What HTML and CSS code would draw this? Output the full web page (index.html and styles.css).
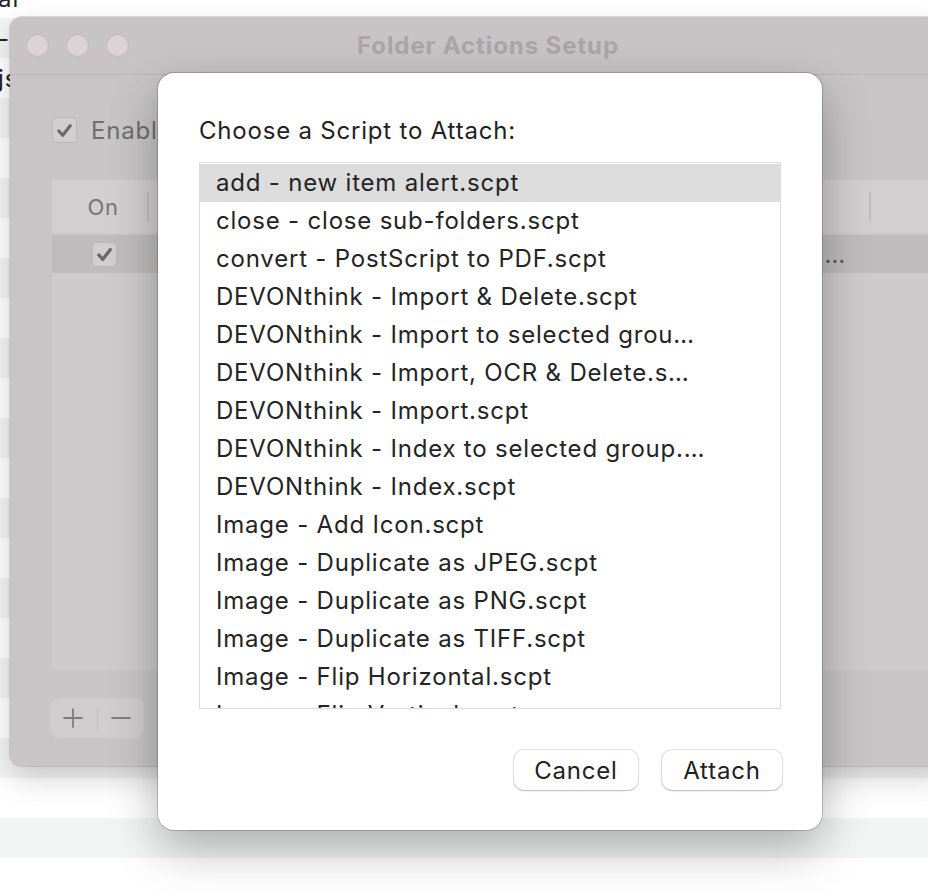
FILE: index.html
```html
<!DOCTYPE html>
<html>
<head>
<meta charset="utf-8">
<link rel="stylesheet" href="styles.css">
</head>
<body>
<div class="page">
  <div class="bg-rows">
    <div class="bg-row"><span class="bg-text">al</span></div>
    <div class="bg-row gray"><span class="bg-text">-l</span></div>
    <div class="bg-row"><span class="bg-text">js</span></div>
    <div class="bg-row gray"></div>
    <div class="bg-row"></div>
    <div class="bg-row gray"></div>
    <div class="bg-row"></div>
    <div class="bg-row gray"></div>
    <div class="bg-row"></div>
    <div class="bg-row gray"></div>
    <div class="bg-row"></div>
    <div class="bg-row gray"></div>
    <div class="bg-row"></div>
    <div class="bg-row gray"></div>
    <div class="bg-row"></div>
    <div class="bg-row gray"></div>
    <div class="bg-row"></div>
    <div class="bg-row gray"></div>
    <div class="bg-row"></div>
    <div class="bg-row gray"></div>
    <div class="bg-row"></div>
    <div class="bg-row gray"></div>
    <div class="bg-row"></div>
  </div>

  <div class="window">
    <div class="titlebar">
      <div class="lights">
        <span class="light"></span><span class="light"></span><span class="light"></span>
      </div>
      <div class="title">Folder Actions Setup</div>
    </div>
    <div class="win-body">
      <label class="enable">
        <span class="cb big"><svg viewBox="0 0 24 24"><path d="M5.5 12.5l4.5 5 8.5-11" fill="none" stroke="currentColor" stroke-width="3.6" stroke-linecap="round" stroke-linejoin="round"/></svg></span>
        <span class="enable-text">Enable Folder Actions</span>
      </label>
      <div class="table">
        <div class="thead">
          <div class="th on">On</div>
          <div class="th sep"></div>
          <div class="th grow">Folders with Actions</div>
          <div class="th sep"></div>
        </div>
        <div class="trow sel">
          <div class="td on"><span class="cb small"><svg viewBox="0 0 24 24"><path d="M5.5 12.5l4.5 5 8.5-11" fill="none" stroke="currentColor" stroke-width="3.8" stroke-linecap="round" stroke-linejoin="round"/></svg></span></div>
          <div class="td name">Desktop — ~/Library/Scripts/Folder Action Scripts/add - new item alert.scpt and other scripts</div>
        </div>
        <div class="tfill"></div>
      </div>
      <div class="pm">
        <span class="pm-btn"><svg viewBox="0 0 24 24"><path d="M12 1.5v21M1.5 12h21" stroke="currentColor" stroke-width="2" fill="none"/></svg></span>
        <span class="pm-sep"></span>
        <span class="pm-btn"><svg viewBox="0 0 24 24"><path d="M1.5 12h21" stroke="currentColor" stroke-width="2" fill="none"/></svg></span>
      </div>
    </div>
  </div>

  <div class="sheet">
    <div class="sheet-label">Choose a Script to Attach:</div>
    <div class="list">
      <div class="item selected">add - new item alert.scpt</div>
      <div class="item">close - close sub-folders.scpt</div>
      <div class="item">convert - PostScript to PDF.scpt</div>
      <div class="item">DEVONthink - Import &amp; Delete.scpt</div>
      <div class="item">DEVONthink - Import to selected grou…</div>
      <div class="item">DEVONthink - Import, OCR &amp; Delete.s…</div>
      <div class="item">DEVONthink - Import.scpt</div>
      <div class="item">DEVONthink - Index to selected group.…</div>
      <div class="item">DEVONthink - Index.scpt</div>
      <div class="item">Image - Add Icon.scpt</div>
      <div class="item">Image - Duplicate as JPEG.scpt</div>
      <div class="item">Image - Duplicate as PNG.scpt</div>
      <div class="item">Image - Duplicate as TIFF.scpt</div>
      <div class="item">Image - Flip Horizontal.scpt</div>
      <div class="item">Image - Flip Vertical.scpt</div>
      <div class="item">Image - Info to Comment.scpt</div>
    </div>
    <div class="buttons">
      <button class="btn cancel">Cancel</button>
      <button class="btn attach">Attach</button>
    </div>
  </div>
</div>
</body>
</html>
```
FILE: styles.css
```css
html, body {
  margin: 0;
  padding: 0;
}
body {
  width: 928px;
  height: 896px;
  overflow: hidden;
  background: #ffffff;
  font-family: Inter, "Noto Sans", "Liberation Sans", sans-serif;
}
.page {
  position: relative;
  width: 928px;
  height: 896px;
  overflow: hidden;
}

/* background page rows */
.bg-rows {
  display: flex;
  flex-direction: column;
  margin-top: -22px;
}
.bg-row {
  height: 40px;
  background: #ffffff;
  display: flex;
  align-items: center;
}
.bg-row.gray { background: #f3f4f4; }
.bg-text {
  font-size: 24px;
  color: #222;
  margin-left: -2px;
  letter-spacing: 1px;
}

/* background window */
.window {
  position: absolute;
  left: 10px;
  top: 17px;
  width: 940px;
  height: 749px;
  border-radius: 12px;
  background: #c7c5c6;
  box-shadow: 0 0 0 1px rgba(0,0,0,0.12), 0 12px 30px rgba(0,0,0,0.18);
  display: flex;
  flex-direction: column;
  overflow: hidden;
}
.titlebar {
  height: 57px;
  flex: none;
  background: #c8c4c6;
  border-bottom: 1px solid #b9b5b7;
  display: flex;
  align-items: center;
  position: relative;
}
.lights {
  display: flex;
  gap: 17px;
  padding-left: 16px;
}
.light {
  width: 23px;
  height: 23px;
  border-radius: 50%;
  background: #dcd3d7;
  box-shadow: inset 0 0 0 1px #c3b8bc;
}
.title {
  position: absolute;
  left: 0;
  width: 956px;
  text-align: center;
  font-weight: 700;
  font-size: 24px;
  letter-spacing: 0.9px;
  color: #aaa6a8;
}
.win-body {
  flex: 1;
  padding: 42px 0 0 42px;
  display: flex;
  flex-direction: column;
  background: #c7c5c6;
}
.enable {
  display: flex;
  align-items: center;
  gap: 14px;
  height: 26px;
}
.cb {
  display: inline-flex;
  align-items: center;
  justify-content: center;
  border-radius: 5px;
  background: #d0cecf;
  border: 1px solid #b9b7b8;
  color: #6a6869;
  box-sizing: border-box;
}
.cb.big { width: 25px; height: 26px; }
.cb.small { width: 25px; height: 25px; }
.cb svg { width: 21px; height: 21px; }
.enable-text {
  font-size: 24px;
  letter-spacing: 0.8px;
  color: #6f6d6e;
  white-space: nowrap;
}
.table {
  margin-top: 37px;
  width: 960px;
  height: 490px;
  display: flex;
  flex-direction: column;
  background: #cdcbcc;
}
.thead {
  height: 53px;
  flex: none;
  display: flex;
  align-items: center;
  background: #d1cfd0;
  border-bottom: 2px solid #c9c7c8;
}
.th {
  font-size: 22px;
  letter-spacing: 0.6px;
  color: #777576;
}
.th.on {
  width: 95px;
  box-sizing: border-box;
  padding-left: 7px;
  text-align: center;
}
.th.sep {
  width: 2px;
  height: 30px;
  background: #bfbdbe;
  flex: none;
}
.th.grow {
  width: 712px;
  padding-left: 8px;
  white-space: nowrap;
  overflow: hidden;
}
.trow {
  height: 38px;
  flex: none;
  display: flex;
  align-items: center;
}
.trow.sel { background: #bebcbd; }
.td.on {
  width: 97px;
  display: flex;
  justify-content: center;
  padding-left: 7px;
  box-sizing: border-box;
  flex: none;
}
.td.name {
  width: 698px;
  box-sizing: border-box;
  padding-left: 7px;
  font-size: 24px;
  letter-spacing: 0.8px;
  color: #5a585a;
  white-space: nowrap;
  overflow: hidden;
  text-overflow: ellipsis;
}
.tfill { flex: 1; }
.pm {
  margin-top: 28px;
  margin-left: -2px;
  width: 94px;
  height: 40px;
  border-radius: 9px;
  background: #cfcdce;
  display: flex;
  align-items: center;
}
.pm-btn {
  flex: 1;
  display: flex;
  justify-content: center;
  align-items: center;
  color: #7e7c7d;
}
.pm-btn svg { width: 22px; height: 22px; }
.pm-sep {
  width: 1px;
  height: 24px;
  background: #bdbbbc;
}

/* sheet dialog */
.sheet {
  position: absolute;
  left: 158px;
  top: 73px;
  width: 664px;
  height: 757px;
  box-sizing: border-box;
  background: #ffffff;
  border-radius: 16px;
  box-shadow: 0 0 0 1px rgba(0,0,0,0.18), 0 18px 48px rgba(0,0,0,0.3);
  padding: 43px 41px 0 41px;
  display: flex;
  flex-direction: column;
}
.sheet-label {
  font-size: 24px;
  letter-spacing: 0.8px;
  color: #222222;
  line-height: 30px;
}
.list {
  margin-top: 16px;
  width: 582px;
  height: 547px;
  box-sizing: border-box;
  border: 1px solid #dcdcdc;
  padding-top: 1px;
  overflow: hidden;
}
.item {
  height: 38px;
  line-height: 38px;
  padding-left: 16px;
  font-size: 24px;
  letter-spacing: 0.8px;
  color: #242424;
  white-space: nowrap;
}
.item.selected { background: #dcdcdc; }
.buttons {
  margin-top: 41px;
  display: flex;
  justify-content: flex-end;
  gap: 24px;
  width: 583px;
}
.btn {
  height: 40px;
  border: none;
  border-radius: 10px;
  background: #ffffff;
  box-shadow: 0 0 0 1px rgba(0,0,0,0.1), 0 1px 2px rgba(0,0,0,0.18);
  font-family: Inter, "Noto Sans", "Liberation Sans", sans-serif;
  font-size: 24px;
  letter-spacing: 0.8px;
  color: #222;
  padding: 0;
}
.btn.cancel { width: 124px; }
.btn.attach { width: 120px; }
```
